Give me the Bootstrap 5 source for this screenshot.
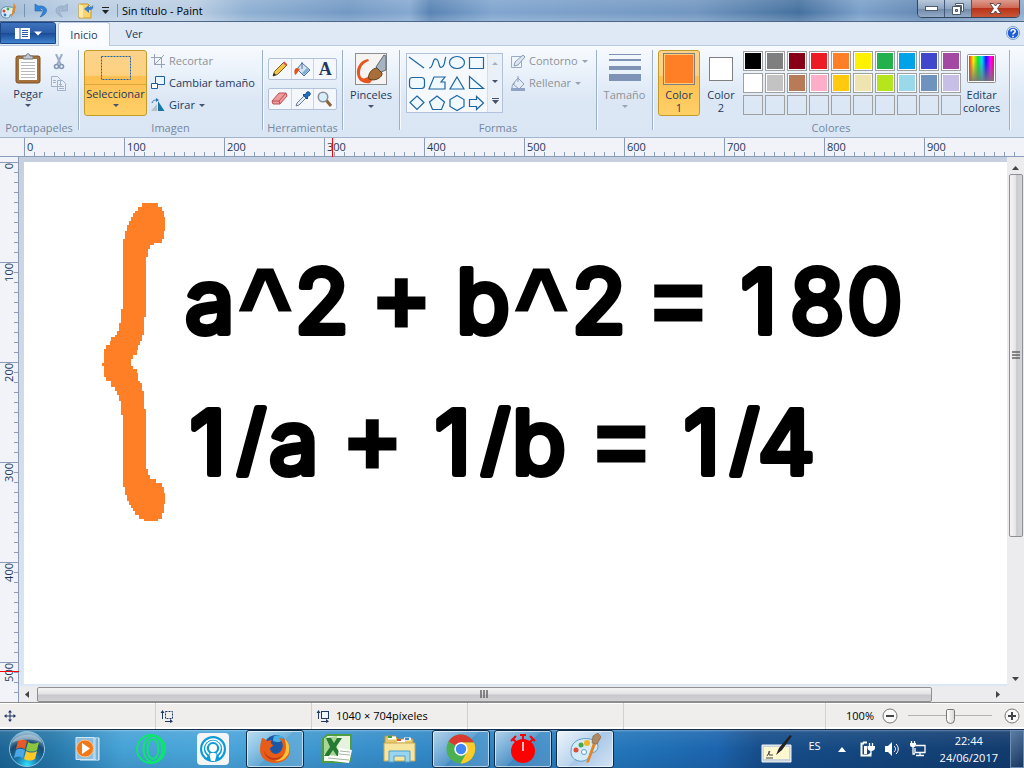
<!DOCTYPE html>
<html lang="es">
<head>
<meta charset="utf-8">
<meta name="viewport" content="width=device-width, initial-scale=1">
<title>Sin título - Paint</title>
<link href="https://cdn.jsdelivr.net/npm/bootstrap@5.3.0/dist/css/bootstrap.min.css" rel="stylesheet">
<style>
:root{--ink:#1e395b;--line:#8b9cb8;--dim:#8e9299}
body{font-family:"Open Sans","Noto Sans",sans-serif;font-size:11px;line-height:14px;color:var(--ink);background:#fff}
button{font:inherit;color:inherit;padding:0;border:0;background:none}
svg{display:block;flex:none}
.titlebar{height:22px;border-bottom:1px solid #4d6587;background:linear-gradient(rgba(255,255,255,.12),rgba(255,255,255,0) 60%,rgba(255,255,255,.18)),linear-gradient(90deg,#9fbad6 0,#bdd0e4 8%,#b9cde2 19%,#8fb0d3 24%,#7399c4 34%,#85a8d0 40%,#5a84b4 42%,#80a5cf 48%,#7196c0 68%,#45719f 78%,#7ba0ca 84%,#6389b4 90%,#8fadd0 100%)}
.titletext{color:#000;line-height:20px}
.vsep{width:1px;height:13px;background:#7b92ae}
.winbtns{height:18px;border:1px solid #33475f;border-top:0;border-radius:0 0 5px 5px;overflow:hidden}
.winbtns button{height:17px;width:27px;border-right:1px solid #43597a;background:linear-gradient(#b9c8db,#8fa5c0 50%,#6f89a8 51%,#94abc6);display:flex;align-items:center;justify-content:center}
.winbtns .shut{width:47px;border:0;background:linear-gradient(#dd9c8f,#cf6a56 45%,#b83319 50%,#c85637)}
.tabs{height:24px;background:#dfe9f5;border-bottom:1px solid #b8c9e0}
.filebtn{width:56px;height:22px;border:1px solid #1b4789;border-radius:0 3px 0 0;background:linear-gradient(#3f73bd,#2a5ba8 50%,#1c4a96 51%,#3f82cf)}
.tabbtn{width:52px;height:24px;line-height:24px}
.tabbtn.on{margin-left:2px;background:#fafcff;border:1px solid #b8c9e0;border-bottom:0;border-radius:3px 3px 0 0}
.ribbon{height:92px;background:linear-gradient(#f8fbff,#e9f1fa 30%,#dce7f5 60%,#dae6f4);border-bottom:1px solid #a3b4cd;padding-top:4px}
.grp{height:80px;border-right:1px solid #9db0cb;box-shadow:1px 0 #f6faff;flex:none}
.g-clip{width:79px}.g-image{width:184px}.g-tools{width:80px}.g-brush{width:57px}.g-shapes{width:197px}.g-size{width:56px}.g-colour{width:357px}
.grpbody{height:70px;padding-left:5px}
.g-shapes .grpbody{padding-left:6px}
.caption{color:#7486a2;text-align:center;white-space:nowrap;line-height:16px}
.big{display:flex;flex-direction:column;align-items:center;height:66px;gap:3px;padding-top:3px}
.big .two{line-height:13px}
.w-paste{width:46px}.w-select{width:63px}.w-colour{width:42px}
.w-select .lbl{width:100%;border-top:1px solid #dba53a;padding-top:2px}
.tri{width:0;height:0;border:3px solid transparent;border-top-color:#44536b;border-bottom:0}
.off,.off .tri{color:var(--dim)}.off .tri{border-top-color:#9aa3b0}
.hot{border:1px solid #c29b29;border-radius:3px;background:linear-gradient(#fbd38c,#fdd180 38%,#ffbf50 40%,#fed067)}
.rowbtn{display:flex;align-items:center;gap:4px;height:22px;white-space:nowrap}
.toolset{display:flex;width:69px;height:22px;border:1px solid #b3c2da;border-radius:2px;background:#f4f8fd}
.toolset button{flex:1;display:flex;align-items:center;justify-content:center;border-right:1px solid #cbd5e6}
.toolset button:last-child{border:0}
.toolset .letter{font:bold 18px/20px "Liberation Serif",serif;color:#1f3864}
.gallery{width:97px;height:60px;margin-top:3px;border:1px solid #b3c2da;background:#f5f9fe;display:flex}
.gallery .steps{width:15px;border-left:1px solid #d3deed;background:#eaf0f8;display:flex;flex-direction:column;justify-content:space-around;align-items:center}
.palette{display:grid;grid-template-columns:repeat(10,20px);gap:2px;align-content:start;margin:1px 2px 0 1px}
.sw{width:20px;height:20px;border:1px solid #a0a0a0;box-shadow:inset 0 0 0 1px #fff}
.sw.none{box-shadow:none}
.hruler{height:19px;background:#f1f3f9;border-bottom:1px solid var(--line)}
.corner{width:24px}
.hscale{display:flex;overflow:hidden;background:linear-gradient(90deg,var(--line) 1px,transparent 1px) 0 100%/10px 4px repeat-x}
.hscale span{flex:0 0 100px;border-left:1px solid var(--line);padding-left:2px;line-height:17px}
.mark-x{position:absolute;left:332px;top:0;width:1px;height:19px;background:red}
.mark-y{position:absolute;left:0;top:514px;width:19px;height:1px;background:red;z-index:1}
.vruler{width:19px;background:#f1f3f9;border-right:1px solid var(--line);padding-top:5px;overflow:hidden}
.vscale{background:linear-gradient(var(--line) 1px,transparent 1px) 100% 0/4px 10px repeat-y}
.vscale .cell{height:100px;border-top:1px solid var(--line)}
.vscale span{display:block;width:18px;writing-mode:vertical-rl;transform:rotate(180deg);line-height:18px}
.stage{background:linear-gradient(#c6d0e1,#dce7f4);padding:5px 0 2px 5px}
.paper{background:#fff;overflow:hidden}
.vbar{width:17px;background:#ececee;padding:5px 0}
.hbar{height:16px;background:#ececee}
.thumb-v{width:14px;flex:0 0 363px;border:1px solid #8c8f94;border-radius:2px;background:linear-gradient(90deg,#f6f6f6,#e6e6e9 45%,#c9c9cf 55%,#d6d6da)}
.thumb-h{height:15px;flex:894 1 0;border:1px solid #8c8f94;border-radius:2px;background:linear-gradient(#f4f4f4,#e3e3e5 45%,#c8c8cc 55%,#d2d2d5)}
.arrow-end{margin:0 23px 0 64px}
.statusbar{height:27px;border-top:1px solid #8c8c8c;background:#f0eded;box-shadow:inset 0 1px #fff,inset 0 -2px #fff;color:#000}
.pane{flex:0 0 156px;border-right:1px solid #d3d0d0;display:flex;align-items:center;gap:5px;padding-left:4px}
.zoomr{appearance:none;width:84px;height:18px;background:linear-gradient(#b3b3b3,#b3b3b3) 0 8px/100% 1px no-repeat;margin:0 4px 0 6px}
.zoomr::-webkit-slider-thumb{appearance:none;width:9px;height:15px;border:1px solid #777;border-radius:2px 2px 5px 5px;background:linear-gradient(90deg,#fff,#d9d9d9)}
.taskbar{height:39px;border-top:1px solid #16304d;background:linear-gradient(rgba(255,255,255,.35) 0,rgba(255,255,255,.08) 2px,transparent 50%,rgba(0,20,60,.1)),linear-gradient(90deg,#1c6595 0,#2678a9 5%,#46a2d6 12%,#4aa5da 22%,#3b93cc 33%,#2f86c6 45%,#2377bb 60%,#1c65ae 70%,#174f8c 74%,#14477f 84%,#123a6c 100%);color:#fff}
.slot{width:62px;height:38px;display:flex;align-items:center;justify-content:center}
.slot.orb{width:58px;padding-right:4px}
.slot.run{width:58px;margin:0 2px;border:1px solid #0e2c48;border-radius:3px;box-shadow:inset 0 0 0 1px rgba(255,255,255,.6);background:linear-gradient(135deg,rgba(255,255,255,.6),rgba(255,255,255,.2) 50%,rgba(255,255,255,.1) 51%,rgba(255,255,255,.2))}
.slot.cur{background:linear-gradient(135deg,#f0f6fc,#b9d3ec 50%,#a7c7e6 51%,#d4e4f5)}
.lang{margin:0 17px 6px 14px}
.tray{gap:9px;margin-left:14px}
.clock{margin:0 12px 0 14px;line-height:17px;text-align:center}
.peek{width:14px;border:1px solid #6d8db3;background:linear-gradient(135deg,#5b7da6,#17365f)}
</style>
</head>
<body class="vh-100 d-flex flex-column overflow-hidden">

<header class="titlebar d-flex align-items-center flex-shrink-0">
  <svg width="16" height="18" viewBox="0 0 16 18"><path d="M1 10C1 5 6 4 10 5c4 0 5 3 4 6-1 2-3 1-4 2 0 3-4 4-7 2-2-1-2-3-2-5z" fill="#d9edf8" stroke="#5e8cab"/><circle cx="4" cy="9" r="1.5" fill="#d9492c"/><circle cx="8" cy="7" r="1.4" fill="#4aa843"/><circle cx="5" cy="13" r="1.4" fill="#3672c4"/><path d="M11 16L13 5l1-4 2 4-2 6z" fill="#e58a22"/></svg>
  <span class="vsep ms-2 me-2"></span>
  <svg width="16" height="16" viewBox="0 0 16 16"><path d="M2 1v7h7L6.500 5.500C10 4 12 8 7 14c9-3 9-12-2-11z" fill="#2f86dc" stroke="#1f5fae" stroke-width=".6"/></svg>
  <svg class="ms-1" width="17" height="16" viewBox="0 0 16 16"><path d="M14 1v7H7l2.500-2.500C6 4 4 8 9 14 0 11 0 2 11 3z" fill="#a3b8d0" stroke="#8ba2bf" stroke-width=".6"/></svg>
  <svg class="ms-2" width="16" height="17" viewBox="0 0 16 17"><path d="M1 2h9l3 3v11H1z" fill="#f8d56c" stroke="#c79a2d"/><path d="M1 2l4 2v12l-4-1z" fill="#fdeaa4"/><path d="M15 3c1 4-1 5-4 5v3L6 7l5-4v2c2 0 3 0 4-2z" fill="#3a7fd0"/></svg>
  <svg class="ms-2" width="7" height="9" viewBox="1 0 7 9"><path d="M1 1.500h7" stroke="#222"/><path d="M1 4h7L4.500 8z" fill="#222"/></svg>
  <span class="vsep ms-2"></span>
  <span class="titletext flex-grow-1 ps-1">Sin título - Paint</span>
  <div class="winbtns d-flex align-self-start me-1">
    <button aria-label="Minimizar"><svg width="13" height="6"><rect x=".5" y=".5" width="12" height="4" fill="#fff" stroke="#4d5a6c"/></svg></button>
    <button aria-label="Restaurar"><svg width="12" height="12"><path d="M3.500.5h8v8h-2v-6h-6z" fill="#fff" stroke="#4d5a6c"/><path d="M.5 3.500h8v8h-8z" fill="#fff" stroke="#4d5a6c"/><path d="M3.500 6.500h2v2h-2z" fill="#8da1bd" stroke="#4d5a6c"/></svg></button>
    <button class="shut" aria-label="Cerrar"><svg width="13" height="11"><path d="M1 .5h3.500L6.500 3l2-2.500H12L8.500 5.500l3.500 5H8.500l-2-2.500-2 2.500H1l3.500-5z" fill="#fff" stroke="#5c4a4f"/></svg></button>
  </div>
</header>

<nav class="tabs d-flex align-items-start flex-shrink-0">
  <button class="filebtn d-flex align-items-center justify-content-center gap-1" aria-label="Menú Paint"><svg width="15" height="11"><path d="M0 0h15v11H0z" fill="#fff"/><path d="M5 0v11" stroke="#2a5ba8"/><path d="M7 2.500h6M7 4.500h6M7 6.500h6M7 8.500h6" stroke="#2a5ba8"/></svg><svg width="8" height="5"><path d="M0 .5h8L4 4.500z" fill="#fff"/></svg></button>
  <button class="tabbtn on">Inicio</button>
  <button class="tabbtn pe-1">Ver</button>
  <button class="ms-auto me-1 mt-1" aria-label="Ayuda"><svg width="14" height="14"><circle cx="7" cy="7" r="6.500" fill="#e6effb" stroke="#7c9ccc"/><circle cx="7" cy="7" r="5.300" fill="#1f5fd6"/><path d="M5 5.500C5 3 9.200 3 9.200 5.300 9.200 7 7 6.800 7 8.600M7 9.800v1.400" fill="none" stroke="#fff" stroke-width="1.500"/></svg></button>
</nav>

<section class="ribbon d-flex flex-shrink-0">
  <div class="grp g-clip">
    <div class="grpbody d-flex">
      <button class="big w-paste"><svg width="26" height="31" viewBox="0 0 26 31"><rect x="1" y="3" width="24" height="27" rx="2" fill="#a8713a" stroke="#7c4f22"/><path d="M4 6h18v21H4z" fill="#fff"/><path d="M6 9.500h14M6 12.500h14M6 15.500h14M6 18.500h14M6 21.500h14M6 24.500h14" stroke="#b3b9c0"/><path d="M8 6V3h3c0-3 4-3 4 0h3v3z" fill="#c4cad1" stroke="#6c737b"/></svg><span>Pegar</span><span class="tri"></span></button>
      <div class="pt-1"><button class="d-block" aria-label="Cortar"><svg width="16" height="17" viewBox="0 0 16 17"><path d="M5 0l5 11M11 0L6 11" stroke="#9badc6" stroke-width="2" fill="none"/><circle cx="5.500" cy="12.500" r="2" fill="none" stroke="#8296b5" stroke-width="1.600"/><circle cx="10.500" cy="12.500" r="2" fill="none" stroke="#8296b5" stroke-width="1.600"/></svg></button><button class="d-block mt-1" aria-label="Copiar"><svg width="16" height="17" viewBox="0 0 16 17"><path d="M.5 1.500h6l3 3v7h-9zM6.500 5.500h5l3 3v7h-8z" fill="#e9eff8" stroke="#9fb1cb"/><path d="M8 9.500h3M8 11.500h5M8 13.500h5M2 5.500h3M2 7.500h3" stroke="#9fb1cb"/></svg></button></div>
    </div>
    <div class="caption">Portapapeles</div>
  </div>
  <div class="grp g-image">
    <div class="grpbody d-flex">
      <button class="big hot w-select"><svg width="32" height="27"><rect x="1.500" y="2.500" width="29" height="23" fill="none" stroke="#1f64a6" stroke-dasharray="2 1"/></svg><span class="lbl">Seleccionar</span><span class="tri"></span></button>
      <div class="ps-1">
        <button class="rowbtn off"><svg width="14" height="14"><path d="M3.500 0v10.500H14M0 3.500h10.500V14M3 11L13 1" fill="none" stroke="#98a3b5"/></svg>Recortar</button>
        <button class="rowbtn"><svg width="14" height="14"><path d="M4.500.5h9v8h-9z" fill="#eaf6ff" stroke="#1d5f9c"/><path d="M.5 7.500h6v5h-6z" fill="#fff" stroke="#1d5f9c"/></svg>Cambiar tamaño</button>
        <button class="rowbtn"><svg width="14" height="14"><path d="M7 13V3l6.500 10z" fill="#1676a8"/><path d="M0 13l6-7v7z" fill="#b7bec8"/><path d="M1 5c1-3 3-3 5-3" stroke="#3272b8" fill="none"/><path d="M5 0l3 2-3 2z" fill="#3272b8"/></svg>Girar<span class="tri"></span></button>
      </div>
    </div>
    <div class="caption">Imagen</div>
  </div>
  <div class="grp g-tools">
    <div class="grpbody d-flex flex-column pt-2">
      <div class="toolset mb-2">
        <button aria-label="Lápiz"><svg width="16" height="16"><path d="M1 15l1.500-4.500L12 1l3 3-9.500 9.500z" fill="#f2c548" stroke="#7d5a1f"/><path d="M11 2l3 3 1.500-1.500-3-3z" fill="#d7564f"/><path d="M1 15l1-3 2 2z" fill="#222"/></svg></button>
        <button aria-label="Relleno"><svg width="17" height="16"><path d="M8 2l8 7-6 6-7-7z" fill="#cfe4f4" stroke="#4f7193"/><path d="M8 8V1" stroke="#4f7193" fill="none"/><path d="M3 7C0 7 0 11 1 14c2-1 3-4 5-6z" fill="#e3521c"/><path d="M10 14l5-5-2-2-5 5z" fill="#77add8"/></svg></button>
        <button class="letter" aria-label="Texto">A</button>
      </div>
      <div class="toolset">
        <button aria-label="Borrador"><svg width="17" height="14"><path d="M1 9l7-8h7l1 3-7 8H2z" fill="#ef9a9c" stroke="#bd5255"/><path d="M1 9h7l7-8M8 9l1 3" fill="none" stroke="#bd5255"/></svg></button>
        <button aria-label="Selector de color"><svg width="16" height="16"><path d="M1 15l1-3 7-7 2 2-7 7z" fill="#e2edf8" stroke="#6f7d91"/><path d="M8 4l1-1 1 1 2-3c2-1 4 1 3 3l-3 2 1 1-1 1z" fill="#1e6fc0" stroke="#174f8b"/></svg></button>
        <button aria-label="Lupa"><svg width="16" height="16"><path d="M9 9l5 6" stroke="#8a6338" stroke-width="3"/><circle cx="6" cy="6" r="4.700" fill="#d9edfb" stroke="#8b9199" stroke-width="1.600"/></svg></button>
      </div>
    </div>
    <div class="caption">Herramientas</div>
  </div>
  <div class="grp g-brush">
    <button class="big mx-auto"><svg width="32" height="32" viewBox="0 0 32 32"><rect x=".5" y=".5" width="31" height="31" fill="#f5f4f2" stroke="#8f8f8f"/><path d="M13 6C6 7 1 14 2 21c1 8 8 10 13 9l5-7-6 0c-5 4-9 3-9-3 0-6 3-10 9-12z" fill="#e8541f"/><path d="M21 14L29 2l2 1v14l-5 2z" fill="#a6b3c1" stroke="#5b6977"/><path d="M14 26c-2-4 3-11 8-11l5 5c1 4-7 9-13 6z" fill="#a87038" stroke="#62401d"/></svg><span>Pinceles</span><span class="tri"></span></button>
  </div>
  <div class="grp g-shapes">
    <div class="grpbody d-flex">
      <div class="gallery">
        <svg width="80" height="58" viewBox="0 0 80 58" fill="#f0f9ff" stroke="#1d67a4" stroke-width="1.200"><path d="M2 3l15 11"/><path d="M22 14c5 0 3-10 7-9s2 10 6 8 2-8 4-10" fill="none"/><ellipse cx="50" cy="8.500" rx="7.500" ry="6"/><path d="M62.500 3.500h14v11h-14z"/><rect x="2.500" y="23.500" width="15" height="11" rx="3"/><path d="M27 23h11l-4 5h4v7H22z"/><path d="M50 23l7 12H43z"/><path d="M62.500 22.500v12h14z"/><path d="M10 42l7 6.500-7 7-7-7z"/><path d="M30 42l7.500 6-3 7.500h-9L22.500 48z"/><path d="M50 41.500l7 4v7l-7 4-7-4v-7z"/><path d="M62.500 45.500h7v-3l7 6.500-7 6.500v-3h-7z"/></svg>
        <div class="steps"><svg width="6" height="3"><path d="M0 3h6L3 0z" fill="#a5b1c3"/></svg><span class="tri"></span><svg width="7" height="6"><path d="M0 .5h7" stroke="#44536b"/><path d="M0 2h7L3.500 6z" fill="#44536b"/></svg></div>
      </div>
      <div class="off ps-1 ms-1">
        <button class="rowbtn"><svg width="14" height="15"><path d="M.5 2.500h10v11H.5z" fill="none" stroke="#9aabc6"/><path d="M3 12l1-4 8-7 2 2-7 8z" fill="#dce5f1" stroke="#8c9db9"/></svg>Contorno<span class="tri"></span></button>
        <button class="rowbtn"><svg width="14" height="15"><path d="M0 12h14v3H0z" fill="#8fa3c4"/><path d="M7 2l6 6-5 5-6-5z" fill="#e5ecf6" stroke="#8c9db9"/><path d="M7 0v6M1 12c0-3 1-5 3-5" stroke="#8c9db9" fill="none"/></svg>Rellenar<span class="tri"></span></button>
      </div>
    </div>
    <div class="caption">Formas</div>
  </div>
  <div class="grp g-size">
    <button class="big off mx-auto"><svg width="32" height="32"><path d="M0 1.500h32" stroke="#7f93b6"/><path d="M0 7h32" stroke="#7f93b6" stroke-width="2"/><path d="M0 15h32" stroke="#7f93b6" stroke-width="4"/><path d="M0 24.500h32" stroke="#7f93b6" stroke-width="7"/></svg><span>Tamaño</span><span class="tri"></span></button>
  </div>
  <div class="grp g-colour">
    <div class="grpbody d-flex">
      <button class="big hot w-colour flex-shrink-0 pt-0"><svg width="32" height="34"><rect x=".5" y="2.500" width="31" height="31" fill="#ffc978" stroke="#7f7f7f"/><rect x="2" y="4" width="28" height="28" fill="#ff7f27"/></svg><span class="two">Color<br>1</span></button>
      <button class="big w-colour flex-shrink-0"><svg width="24" height="32"><rect x=".5" y="4.500" width="23" height="23" fill="#fff" stroke="#7f7f7f"/></svg><span class="two">Color<br>2</span></button>
      <div class="palette" id="palette"></div>
      <button class="big"><svg width="30" height="32"><defs><linearGradient id="hue"><stop offset="0" stop-color="#f22"/><stop offset=".17" stop-color="#fe0"/><stop offset=".36" stop-color="#1d3"/><stop offset=".52" stop-color="#0df"/><stop offset=".68" stop-color="#11f"/><stop offset=".86" stop-color="#f0f"/><stop offset="1" stop-color="#f04"/></linearGradient><linearGradient id="grey" x2="0" y2="1"><stop offset=".2" stop-color="#777" stop-opacity="0"/><stop offset="1" stop-color="#777" stop-opacity=".9"/></linearGradient></defs><rect x=".5" y="1.500" width="28" height="28" rx="1" fill="#fff" stroke="#8d8d8d"/><rect x="2" y="3" width="25" height="25" fill="url(#hue)"/><rect x="2" y="3" width="25" height="25" fill="url(#grey)"/></svg><span class="two">Editar<br>colores</span></button>
    </div>
    <div class="caption">Colores</div>
  </div>
</section>

<div class="hruler d-flex position-relative flex-shrink-0">
  <div class="corner flex-shrink-0"></div>
  <div class="hscale flex-grow-1" id="hscale"></div>
  <span class="mark-x"></span>
</div>

<main class="d-flex flex-grow-1 position-relative overflow-hidden">
  <div class="vruler flex-shrink-0"><div class="vscale" id="vscale"></div></div>
  <span class="mark-y"></span>
  <div class="d-flex flex-column flex-grow-1 overflow-hidden">
    <div class="d-flex flex-grow-1 overflow-hidden">
      <div class="stage d-flex flex-grow-1 overflow-hidden">
        <div class="paper flex-grow-1">
          <svg width="1040" height="704" viewBox="24 162 1040 704">
            <path fill="#ff7f27" d="M142 203H158V207H162V211H164V217H165V231H164V239H162V243H154V245H150V249H148V257H146V317H144V335H142V341H140V345H138V350H137V355H133V359H131V366H133V369H137V373H138V381H140V383H142V391H144V409H146V469H148V475H150V479H156V483H162V487H164V493H165V504H164V513H162V519H158V521H144V519H139V515H135V511H133V508H131V505H129V501H127V495H125V487H123V415H121V401H119V395H117V391H115V387H111V381H106V377H104V366H102V363H104V349H106V345H110V341H111V337H115V335H117V331H119V323H121V309H123V239H125V231H127V225H129V221H131V217H133V213H135V211H138V207H142Z"/>
            <g font-family="Inter,sans-serif" font-size="88" stroke="#000" stroke-width="6" stroke-linejoin="round">
              <text y="333"><tspan x="185">a</tspan><tspan x="295">2</tspan><tspan x="456">b</tspan><tspan x="572">2</tspan><tspan x="741">1</tspan><tspan x="790">8</tspan><tspan x="847">0</tspan></text>
              <text y="474"><tspan x="190">1</tspan><tspan x="269">a</tspan><tspan x="435">1</tspan><tspan x="512">b</tspan><tspan x="684">1</tspan><tspan x="758">4</tspan></text>
            </g>
            <g font-family="Liberation Sans,Arial,sans-serif" font-size="90" stroke="#000" stroke-width="6" stroke-linejoin="round">
              <text y="474"><tspan x="239">/</tspan><tspan x="483">/</tspan><tspan x="732">/</tspan></text>
            </g>
            <g font-family="Liberation Sans,Arial,sans-serif" font-weight="bold" font-size="90" stroke="#000" stroke-width="3">
              <text y="333"><tspan x="239">^</tspan><tspan x="375">+</tspan><tspan x="515">^</tspan><tspan x="652">=</tspan></text>
              <text y="474"><tspan x="346">+</tspan><tspan x="595">=</tspan></text>
            </g>
          </svg>
        </div>
      </div>
      <div class="vbar d-flex flex-column align-items-center flex-shrink-0">
        <svg class="mt-1 mb-1" width="7" height="4"><path d="M0 4h7L3.500 0z" fill="#444"/></svg>
        <div class="thumb-v d-flex align-items-center justify-content-center"><svg width="8" height="9"><path d="M0 1h8M0 4h8M0 7h8" stroke="#666" stroke-width="1.500"/></svg></div>
        <svg class="mt-auto" width="7" height="4"><path d="M0 0h7L3.500 4z" fill="#444"/></svg>
      </div>
    </div>
    <div class="hbar d-flex align-items-center flex-shrink-0">
      <svg class="ms-1 me-2" width="6" height="7"><path d="M6 0v7L2 3.500z" fill="#444"/></svg>
      <div class="thumb-h d-flex align-items-center justify-content-center"><svg width="9" height="8"><path d="M1 0v8M4 0v8M7 0v8" stroke="#666" stroke-width="1.500"/></svg></div>
      <svg class="arrow-end" width="5" height="7"><path d="M0 0v7l4-3.500z" fill="#444"/></svg>
    </div>
  </div>
</main>

<footer class="statusbar d-flex flex-shrink-0">
  <div class="pane"><svg width="12" height="12"><path d="M6 1v10M1 6h10" stroke="#1f3864"/><path d="M4 2.500L6 0l2 2.500zM4 9.500L6 12l2-2.500zM2.500 4L0 6l2.500 2zM9.500 4L12 6 9.500 8z" fill="#1f3864"/></svg></div>
  <div class="pane"><svg width="15" height="13"><rect x="5.500" y="1.500" width="7" height="7" fill="none" stroke="#1f3864" stroke-dasharray="2 1"/><path d="M2.500 9V2M5 11.500h6" stroke="#1f3864"/><path d="M.5 3l2-3 2 3zM10 9l3 2.500-3 1.500z" fill="#1f3864"/></svg></div>
  <div class="pane"><svg width="15" height="13"><rect x="5.500" y="1.500" width="7" height="7" fill="#eef6ff" stroke="#1f3864"/><path d="M2.500 9V2M5 11.500h6" stroke="#1f3864"/><path d="M.5 3l2-3 2 3zM10 9l3 2.500-3 1.500z" fill="#1f3864"/></svg><span>1040 × 704píxeles</span></div>
  <div class="pane"></div>
  <div class="pane flex-grow-1"></div>
  <div class="d-flex align-items-center ps-3 pe-1">
    <label for="zoom" class="ms-1 me-2">100%</label>
    <button class="me-1" aria-label="Alejar"><svg width="16" height="16"><circle cx="8" cy="8" r="7" fill="#f8f8f8" stroke="#777"/><path d="M4 8h8" stroke="#444" stroke-width="2"/></svg></button>
    <input id="zoom" class="zoomr" type="range" min="0" max="100" value="50">
    <button class="ms-2" aria-label="Acercar"><svg width="16" height="16"><circle cx="8" cy="8" r="7" fill="#f8f8f8" stroke="#777"/><path d="M4 8h8M8 4v8" stroke="#444" stroke-width="2"/></svg></button>
  </div>
</footer>

<div class="taskbar d-flex flex-shrink-0">
  <button class="slot orb" aria-label="Inicio"><svg width="38" height="38" viewBox="0 0 38 38"><defs><radialGradient id="orb" cx=".5" cy=".95" r=".9"><stop offset="0" stop-color="#2fe0ff"/><stop offset=".35" stop-color="#1a78ac"/><stop offset=".7" stop-color="#174a70"/><stop offset="1" stop-color="#8fb6cf"/></radialGradient></defs><circle cx="19" cy="19" r="17.500" fill="url(#orb)" stroke="#8fc6e0"/><path d="M10 11c3-2 5-2 9 0l-2 8c-3-2-6-2-9 0z" fill="#e8592a"/><path d="M20 12c4 2 7 2 11 0l-2 8c-3 2-7 2-11 0z" fill="#8cc63f"/><path d="M8 20c3-2 6-1 9 0l-2 8c-3-2-6-2-9 0z" fill="#4aa8e8"/><path d="M18 21c4 2 7 2 11 0l-2 8c-4 2-7 2-11 0z" fill="#fdc927"/><path d="M4 13C7 3 31 1 34 13 26 8 12 9 4 13z" fill="#fff" opacity=".35"/></svg></button>
  <button class="slot" aria-label="Reproductor multimedia"><svg width="28" height="26"><path d="M5 2h19v22H5z" fill="#9fcdeb" stroke="#e0f1fb"/><path d="M22 2v22" stroke="#4f93c0"/><path d="M1 1.500h18v22H1z" fill="#8ebfe0" stroke="#cfe7f6"/><circle cx="10" cy="12.500" r="8.500" fill="#f07818" stroke="#fbc58d"/><path d="M7 7l8 5.500L7 18z" fill="#fff"/></svg></button>
  <button class="slot" aria-label="Navegador"><svg width="30" height="30" fill="none" stroke="#0de571" stroke-width="2"><circle cx="15" cy="15" r="14"/><ellipse cx="17" cy="15" rx="9.500" ry="13"/><ellipse cx="17" cy="15" rx="5.500" ry="10"/></svg></button>
  <button class="slot" aria-label="Difusión"><svg width="32" height="32"><rect width="32" height="32" rx="4" fill="#f3f5f7"/><circle cx="16" cy="16" r="13" fill="#0d9bd8"/><g fill="none" stroke="#fff" stroke-width="1.600"><path d="M10 24a10 10 0 1 1 12 0M12 21a7 7 0 1 1 8 0"/></g><circle cx="16" cy="15" r="4" fill="#fff"/><path d="M12.500 22c0-3 7-3 7 0l-1.500 6h-4z" fill="#fff"/></svg></button>
  <button class="slot run" aria-label="Firefox"><svg width="32" height="32" viewBox="0 0 32 32"><circle cx="17" cy="14" r="12" fill="#1c57a5"/><path d="M15 3c5-2 9 0 10 3-3 0-3 4-7 3s-5 0-3-6z" fill="#46b0e5"/><path d="M3 5c2 0 4 2 5 3l5-1c-2 2-1 4 1 5 1 1-3 2-3 4 2 7 10 6 12 0 2-4 0-8-3-11 6 0 11 5 11 12 0 8-7 13-15 13S1 25 1 17C1 12 2 9 3 5z" fill="#e85c19"/><path d="M25 5c5 4 6 9 5 14-2 7-9 10-14 9 9-2 14-11 9-23z" fill="#fbc337"/><path d="M5 18c3 7 11 10 19 4-4 7-17 7-19-4z" fill="#b93615"/></svg></button>
  <button class="slot" aria-label="Excel"><svg width="31" height="30"><path d="M5 1h24v25l-3 2H1V5z" fill="#e8f3df" stroke="#4e9d43" stroke-width="2"/><path d="M2 4l13-2v20L2 20z" fill="#a9d597"/><path d="M4 4h5l3 5 3-5h5l-6 9 6 9h-5l-4-6-4 6H2l6-9z" fill="#257b31"/><path d="M17 14l13 2-3 13-25-3 2-4h12z" fill="#fff"/><path d="M18 17l10 1M17 20l11 1M6 24l21 2" stroke="#a4b6a2"/></svg></button>
  <button class="slot" aria-label="Explorador"><svg width="33" height="32"><path d="M2 3h10l3 3h15v21H2z" fill="#e8c867" stroke="#b8943e"/><path d="M5 5h8M14 8h8M21 6h7" stroke="#fff" stroke-width="3"/><path d="M5 4h4" stroke="#3ba53c" stroke-width="2"/><path d="M14 7h4" stroke="#d65030" stroke-width="2"/><path d="M22 6h4" stroke="#3d8ad1" stroke-width="2"/><path d="M1 10h31v18H1z" fill="#f7e6a0" stroke="#c8a854"/><path d="M6 29V18h21v11h-5v-6H11v6z" fill="#9bd4f0" stroke="#4fa0cb"/></svg></button>
  <button class="slot run" aria-label="Chrome"><svg width="30" height="30" viewBox="0 0 30 30"><circle cx="15" cy="15" r="14.500" fill="#4caf50"/><path d="M15 15L2.500 7.500C8-2 22-2 28 8.500H15z" fill="#d93b30"/><path d="M15 15V8.500h13c4 9-2 21-13.500 21L21 18z" fill="#fbcb2d"/><circle cx="15" cy="15" r="6.700" fill="#fff"/><circle cx="15" cy="15" r="5.200" fill="#4285f4"/></svg></button>
  <button class="slot run" aria-label="Cronómetro"><svg width="28" height="30"><circle cx="14" cy="17" r="12" fill="red"/><path d="M11 1h6M14 1v6M2 7l5-5M26 7l-5-5M4 5l4 4M24 5l-4 4" stroke="red" stroke-width="2"/><path d="M14 8v9" stroke="#fff" stroke-width="1.500"/></svg></button>
  <button class="slot run cur" aria-label="Paint"><svg width="32" height="32" viewBox="0 0 32 32"><path d="M2 18C2 8 12 4 21 6c8 1 10 8 6 12-2 2-5 1-6 4-1 5-8 8-14 5-4-2-5-5-5-9z" fill="#d3eaf8" stroke="#5d9cc6"/><circle cx="7" cy="17" r="2.500" fill="#e04b32"/><circle cx="12" cy="12" r="2.500" fill="#48a94b"/><circle cx="18" cy="10" r="3" fill="#f4b326"/><circle cx="15" cy="19" r="2.500" fill="#f7fbfe" stroke="#5d9cc6"/><path d="M17 30l7-20 3 1-7 18z" fill="#e38428"/><path d="M23 10l1-7 5-3 3 4-4 7z" fill="#b08a62" stroke="#7c5a38" stroke-width=".6"/></svg></button>
  <div class="ms-auto d-flex align-items-center">
    <svg width="33" height="30"><path d="M1 11h29v17H1z" fill="#c9d3dc" stroke="#f0f4f7"/><path d="M3 13h25v12H3z" fill="#fdf8cf"/><path d="M6 22l3-5M8 17v4h4M5 24h7" fill="none" stroke="#444"/><path d="M15 21l3-7L29 1l2 1-10 14z" fill="#222"/></svg>
    <span class="lang">ES</span>
    <svg width="8" height="5"><path d="M0 5h8L4 0z" fill="#fff"/></svg>
    <div class="tray d-flex align-items-center">
      <svg width="16" height="16"><path d="M4 2.500H1.500v12h9V12M3 1.500h4" fill="none" stroke="#fff" stroke-width="2"/><path d="M4 5h3v8H4z" fill="#fff"/><path d="M9.500 2v4M12.500 2v4M11 9v3c0 2-3 1-3 3" fill="none" stroke="#fff" stroke-width="1.300"/><path d="M7.500 5H15v2c0 4-7.500 4-7.500 0z" fill="#fff"/></svg>
      <svg width="16" height="16"><path d="M0 5h3l4-4v14l-4-4H0z" fill="#fff"/><path d="M9 5c2 2 2 4 0 6M11 3c3 3 3 7 0 10" fill="none" stroke="#fff"/></svg>
      <svg width="16" height="16" fill="none" stroke="#fff" stroke-width="1.300"><path d="M6 4.500h9v7H5V7M6 14.500h8M10 12v2M3 6v7h2"/><path d="M1.500 0v2M4.500 0v2" /><path d="M0 2h6v2c0 3-6 3-6 0z" fill="#fff" stroke="none"/></svg>
    </div>
    <div class="clock">22:44<br>24/06/2017</div>
    <button class="peek align-self-stretch" aria-label="Mostrar escritorio"></button>
  </div>
</div>

<script src="https://cdn.jsdelivr.net/npm/bootstrap@5.3.0/dist/js/bootstrap.bundle.min.js"></script>
<script>
const colours=['#000000','#7f7f7f','#880015','#ed1c24','#ff7f27','#fff200','#22b14c','#00a2e8','#3f48cc','#a349a4','#ffffff','#c3c3c3','#b97a57','#ffaec9','#ffc90e','#efe4b0','#b5e61d','#99d9ea','#7092be','#c8bfe7'];
for(let i=0;i<30;i++){
  const b=document.createElement('button');
  b.className='sw'+(colours[i]?'':' none');
  b.setAttribute('aria-label',colours[i]||'Vacío');
  if(colours[i])b.style.background=colours[i];
  document.getElementById('palette').append(b);
}
for(let n=0;n<1000;n+=100){
  const s=document.createElement('span');s.textContent=n;
  document.getElementById('hscale').append(s);
}
for(let n=0;n<=500;n+=100){
  const c=document.createElement('div');c.className='cell';
  const s=document.createElement('span');s.textContent=n;c.append(s);
  document.getElementById('vscale').append(c);
}
</script>
</body>
</html>
